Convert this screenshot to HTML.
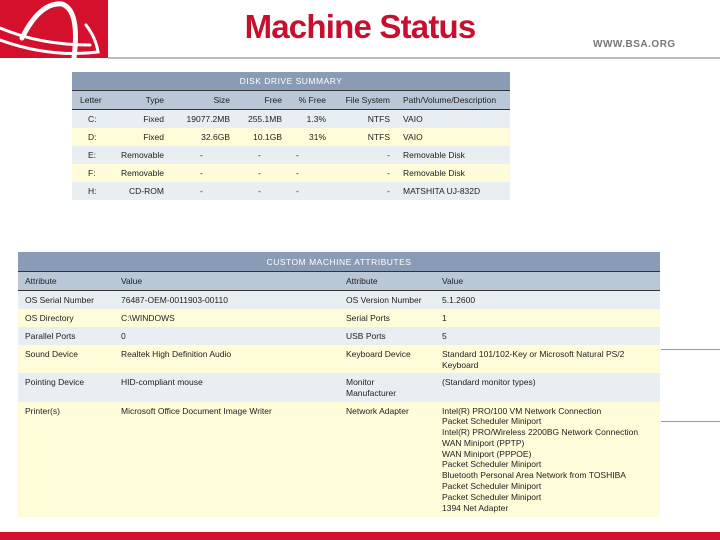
<!DOCTYPE html>
<html><head><style>
body{margin:0;width:720px;height:540px;position:relative;background:#fff;font-family:"Liberation Sans",sans-serif;overflow:hidden}
.abs{position:absolute}
table{border-collapse:collapse;font-size:8.5px;color:#222;position:absolute;table-layout:fixed}
td{padding:0;vertical-align:top;white-space:nowrap;overflow:visible}
.t{background:#8a9bb5;color:#fff;text-align:center;height:19px;vertical-align:middle;letter-spacing:.5px;border-bottom:1px solid #333}
.h td{background:#b9c7d7;height:18px;vertical-align:middle;border-bottom:1px solid #333}
.b{background:#e9eef2}.y{background:#fefcd9}
#d td{vertical-align:middle;height:18px}
#c td{padding-top:4px}
</style></head><body>
<div class="abs" style="left:0;top:0;width:108px;height:58px;background:#d4102c;overflow:hidden">
<svg width="108" height="58"><g fill="none" stroke="#fff" stroke-linecap="round">
<path d="M22 38 Q40 2 62 4 Q80 10 74 58" stroke-width="5"/>
<path d="M0 28 Q40 45 90 45" stroke-width="3"/>
<path d="M0 40 Q50 58 98 52 Q96 38 86 25" stroke-width="3"/>
</g></svg></div>
<div class="abs" style="left:108px;top:57px;width:612px;height:2px;background:#bbb"></div>
<div class="abs" style="left:0;width:720px;top:8px;text-align:center;font-weight:bold;font-size:33px;color:#c8102e;letter-spacing:-.8px">Machine Status</div>
<div class="abs" style="left:593px;top:39px;font-weight:bold;font-size:10px;color:#777;letter-spacing:.5px">WWW.BSA.ORG</div>

<table id="d" style="left:72px;top:72px;width:438px">
<colgroup><col style="width:48px"><col style="width:44px"><col style="width:66px"><col style="width:52px"><col style="width:44px"><col style="width:64px"><col style="width:120px"></colgroup>
<tr><td class="t" colspan="7">DISK DRIVE SUMMARY</td></tr>
<tr class="h"><td style="padding-left:8px">Letter</td><td style="text-align:right">Type</td><td style="text-align:right">Size</td><td style="text-align:right">Free</td><td style="text-align:right">% Free</td><td style="text-align:right">File System</td><td style="padding-left:13px">Path/Volume/Description</td></tr>
<tr class="b"><td style="padding-left:16px">C:</td><td align="right">Fixed</td><td align="right">19077.2MB</td><td align="right">255.1MB</td><td align="right">1.3%</td><td align="right">NTFS</td><td style="padding-left:13px">VAIO</td></tr>
<tr class="y"><td style="padding-left:16px">D:</td><td align="right">Fixed</td><td align="right">32.6GB</td><td align="right">10.1GB</td><td align="right">31%</td><td align="right">NTFS</td><td style="padding-left:13px">VAIO</td></tr>
<tr class="b"><td style="padding-left:16px">E:</td><td align="right">Removable</td><td style="padding-left:36px">-</td><td style="padding-left:28px">-</td><td style="padding-left:14px">-</td><td align="right">-</td><td style="padding-left:13px">Removable Disk</td></tr>
<tr class="y"><td style="padding-left:16px">F:</td><td align="right">Removable</td><td style="padding-left:36px">-</td><td style="padding-left:28px">-</td><td style="padding-left:14px">-</td><td align="right">-</td><td style="padding-left:13px">Removable Disk</td></tr>
<tr class="b"><td style="padding-left:16px">H:</td><td align="right">CD-ROM</td><td style="padding-left:36px">-</td><td style="padding-left:28px">-</td><td style="padding-left:14px">-</td><td align="right">-</td><td style="padding-left:13px">MATSHITA UJ-832D</td></tr>
</table>

<table id="c" style="left:18px;top:252px;width:642px">
<colgroup><col style="width:103px"><col style="width:225px"><col style="width:96px"><col style="width:218px"></colgroup>
<tr><td class="t" colspan="4" style="padding-top:0">CUSTOM MACHINE ATTRIBUTES</td></tr>
<tr class="h"><td style="padding:0 0 0 7px">Attribute</td><td style="padding:0">Value</td><td style="padding:0">Attribute</td><td style="padding:0">Value</td></tr>
<tr class="b" style="height:18px"><td style="padding-left:7px">OS Serial Number</td><td>76487-OEM-0011903-00110</td><td>OS Version Number</td><td>5.1.2600</td></tr>
<tr class="y" style="height:18px"><td style="padding-left:7px">OS Directory</td><td>C:\WINDOWS</td><td>Serial Ports</td><td>1</td></tr>
<tr class="b" style="height:18px"><td style="padding-left:7px">Parallel Ports</td><td>0</td><td>USB Ports</td><td>5</td></tr>
<tr class="y" style="height:28px"><td style="padding-left:7px">Sound Device</td><td>Realtek High Definition Audio</td><td>Keyboard Device</td><td style="line-height:11px">Standard 101/102-Key or Microsoft Natural PS/2<br>Keyboard</td></tr>
<tr class="b" style="height:29px"><td style="padding-left:7px">Pointing Device</td><td>HID-compliant mouse</td><td style="line-height:11px">Monitor<br>Manufacturer</td><td>(Standard monitor types)</td></tr>
<tr class="y" style="height:115px"><td style="padding-left:7px">Printer(s)</td><td>Microsoft Office Document Image Writer</td><td>Network Adapter</td><td style="line-height:10.8px">Intel(R) PRO/100 VM Network Connection<br>Packet Scheduler Miniport<br>Intel(R) PRO/Wireless 2200BG Network Connection<br>WAN Miniport (PPTP)<br>WAN Miniport (PPPOE)<br>Packet Scheduler Miniport<br>Bluetooth Personal Area Network from TOSHIBA<br>Packet Scheduler Miniport<br>Packet Scheduler Miniport<br>1394 Net Adapter</td></tr>
</table>
<div class="abs" style="left:661px;top:349px;width:59px;height:1px;background:#999"></div>
<div class="abs" style="left:661px;top:421px;width:59px;height:1px;background:#999"></div>
<div class="abs" style="left:0;top:532px;width:720px;height:8px;background:#d4102c"></div>
</body></html>
